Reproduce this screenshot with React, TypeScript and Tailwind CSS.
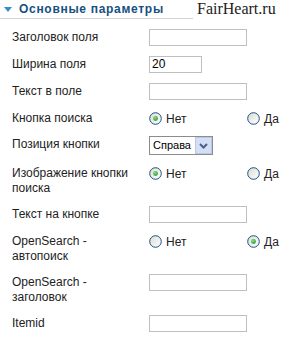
import React from 'react';

function Radio({ checked }: { checked?: boolean }) {
  return (
    <svg width="13" height="13" viewBox="0 0 13 13" className="shrink-0">
      <defs>
        <linearGradient id="rb" x1="0" y1="0" x2="1" y2="1">
          <stop offset="0" stopColor="#dcdcd4" />
          <stop offset="1" stopColor="#ffffff" />
        </linearGradient>
        <radialGradient id="rd" cx="0.4" cy="0.35" r="0.7">
          <stop offset="0" stopColor="#8ee08a" />
          <stop offset="1" stopColor="#1c9a1c" />
        </radialGradient>
      </defs>
      <circle cx="6.5" cy="6.5" r="5.8" fill="url(#rb)" stroke="#1c5180" strokeWidth="1" />
      {checked && <circle cx="6.5" cy="6.5" r="2.4" fill="url(#rd)" />}
    </svg>
  );
}

function TextInput({ w = 'w-[98px]', value = '' }: { w?: string; value?: string }) {
  return (
    <div className={`${w} h-[17px] border border-[#bfbfbf] bg-white text-[12px] leading-[15px] pl-[2px] text-black`}>
      {value}
    </div>
  );
}

function RadioPair({ yes }: { yes?: boolean }) {
  return (
    <div className="flex items-center h-[15px] mt-px">
      <div className="w-[98px] flex items-center gap-[4px]">
        <Radio checked={!yes} />
        <span>Нет</span>
      </div>
      <div className="flex items-center gap-[4px]">
        <Radio checked={yes} />
        <span>Да</span>
      </div>
    </div>
  );
}

function Row({ label, children }: { label: React.ReactNode; children: React.ReactNode }) {
  return (
    <div className="flex items-start py-[5px]">
      <div className="w-[149px] shrink-0 pl-[12px] pr-2 leading-[15px] pt-px">{label}</div>
      <div className="flex-1">{children}</div>
    </div>
  );
}

export default function App() {
  return (
    <div
      className="relative w-[289px] h-[337px] bg-white overflow-hidden text-[12px] text-[#222]"
      style={{ fontFamily: '"Liberation Sans", Arial, sans-serif' }}
    >
      <div className="w-[245px] h-[19px] border-b border-[#d4d4d4] flex items-center">
        <svg width="8" height="5" viewBox="0 0 8 5" className="ml-[4px] mr-[7px]">
          <polygon points="0,0 8,0 4,5" fill="#3a8cc8" />
        </svg>
        <span className="font-bold text-[12px] text-[#16507f] tracking-[0.7px]">Основные параметры</span>
      </div>
      <div
        className="absolute right-0 top-0 h-[19px] w-[96px] bg-white pl-[4px] text-[16px] leading-[18px] text-[#222]"
        style={{ fontFamily: '"Liberation Serif", "Times New Roman", serif' }}
      >
        FairHeart.ru
      </div>

      <div className="pt-[5px]">
        <Row label="Заголовок поля">
          <TextInput />
        </Row>
        <Row label="Ширина поля">
          <TextInput w="w-[53px]" value="20" />
        </Row>
        <Row label="Текст в поле">
          <TextInput />
        </Row>
        <Row label="Кнопка поиска">
          <RadioPair />
        </Row>
        <Row label="Позиция кнопки">
          <div className="w-[64px] h-[19px] border border-[#8c8c8c] bg-white flex items-center">
            <span className="flex-1 pl-[3px] text-[11px] text-black">Справа</span>
            <div className="w-[17px] h-[17px] border border-[#b9c8e8] bg-[#d4def5] flex items-center justify-center">
              <svg width="9" height="6" viewBox="0 0 9 6">
                <polyline points="1,1 4.5,4.5 8,1" fill="none" stroke="#4d6185" strokeWidth="2" />
              </svg>
            </div>
          </div>
        </Row>
        <Row label={<>Изображение кнопки<br />поиска</>}>
          <RadioPair />
        </Row>
        <Row label="Текст на кнопке">
          <TextInput />
        </Row>
        <Row label={<>OpenSearch -<br />автопоиск</>}>
          <RadioPair yes />
        </Row>
        <Row label={<>OpenSearch -<br />заголовок</>}>
          <TextInput />
        </Row>
        <Row label="Itemid">
          <TextInput />
        </Row>
      </div>
    </div>
  );
}
